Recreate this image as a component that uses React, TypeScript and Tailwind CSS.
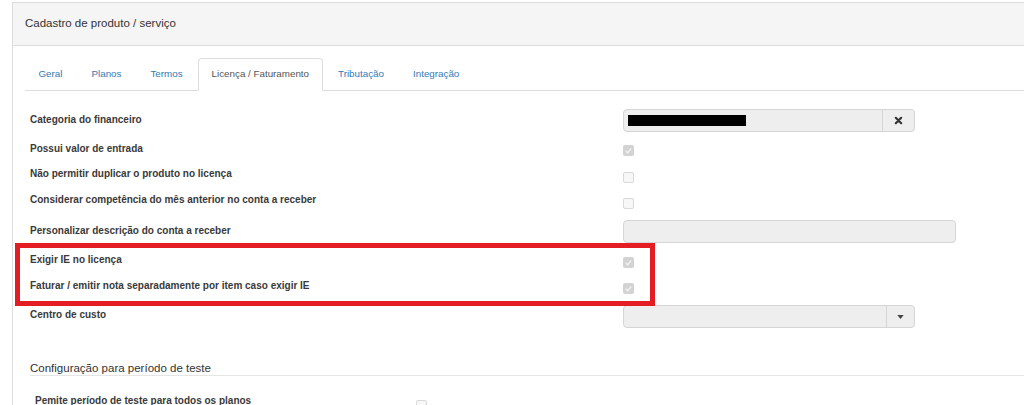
import React from 'react';

const tabs = ['Geral', 'Planos', 'Termos', 'Licença / Faturamento', 'Tributação', 'Integração'];

function Check({ checked }: { checked?: boolean }) {
  if (checked) {
    return (
      <span className="flex h-[11px] w-[11px] items-center justify-center rounded-[2px] bg-[#d3d3d3]">
        <svg viewBox="0 0 12 12" className="h-[9px] w-[9px]">
          <path d="M2.3 6.4 L4.9 9 L9.8 3.2" fill="none" stroke="#f3f3f3" strokeWidth="1.7" />
        </svg>
      </span>
    );
  }
  return <span className="block h-[11px] w-[11px] rounded-[2px] border border-[#d9d9d9] bg-[#f7f7f7]" />;
}

function Label({ children, className = '' }: { children: React.ReactNode; className?: string }) {
  return (
    <div className={`w-[593px] shrink-0 text-[10px] font-bold leading-[14px] text-[#3a3a3a] ${className}`}>
      {children}
    </div>
  );
}

export default function App() {
  return (
    <div className="h-[405px] w-[1024px] overflow-hidden bg-white font-['Liberation_Sans',Arial,sans-serif]">
      <div className="ml-[12px] mt-[2px] w-[1100px] border-l border-t border-[#ddd]">
        {/* cabeçalho do painel */}
        <div className="flex h-[43px] items-center border-b border-[#ddd] bg-[#f5f5f5] pl-[12px] text-[11.5px] text-[#333]">
          Cadastro de produto / serviço
        </div>

        <div className="pl-[12px] pt-[12px]">
          <ul className="flex border-b border-[#ddd]">
            {tabs.map((t, i) => (
              <li key={t} className="-mb-px mr-[2px]">
                <span
                  className={
                    i === 3
                      ? 'flex h-[33px] items-center rounded-t-[4px] border border-[#ddd] border-b-transparent bg-white px-[12.5px] text-[9.8px] text-[#555]'
                      : 'flex h-[33px] items-center rounded-t-[4px] border border-transparent px-[12.5px] text-[9.8px] text-[#337ab7]'
                  }
                >
                  {t}
                </span>
              </li>
            ))}
          </ul>

          <div className="pl-[5px] pt-[16px]">
            <div className="flex h-[28px] items-start">
              <Label className="pt-[6px]">Categoria do financeiro</Label>
              <div className="mt-[2px] flex h-[23px] w-[292px] rounded-[4px] border border-[#d5d5d5] bg-[#eee]">
                <div className="flex flex-1 items-center pl-[4px]">
                  <span className="h-[11px] w-[118px] bg-black" />
                </div>
                <div className="flex w-[32px] items-center justify-center border-l border-[#d5d5d5]">
                  <svg viewBox="0 0 10 10" className="h-[9px] w-[9px]">
                    <path d="M2 2 L8 8 M8 2 L2 8" stroke="#333" strokeWidth="2.4" strokeLinecap="round" />
                  </svg>
                </div>
              </div>
            </div>

            <div className="flex h-[27px] items-start">
              <Label className="pt-[7px]">Possui valor de entrada</Label>
              <div className="mt-[10px]"><Check checked /></div>
            </div>

            <div className="flex h-[26px] items-start">
              <Label className="pt-[5px]">Não permitir duplicar o produto no licença</Label>
              <div className="mt-[10px]"><Check /></div>
            </div>

            <div className="flex h-[27px] items-start">
              <Label className="pt-[5px]">Considerar competência do mês anterior no conta a receber</Label>
              <div className="mt-[10px]"><Check /></div>
            </div>

            <div className="flex h-[30px] items-start">
              <Label className="pt-[9px]">Personalizar descrição do conta a receber</Label>
              <div className="mt-[5px] h-[23px] w-[333px] rounded-[4px] border border-[#d5d5d5] bg-[#eee]" />
            </div>

            <div className="relative">
              <div className="flex h-[27px] items-start">
                <Label className="pt-[8px]">Exigir IE no licença</Label>
                <div className="mt-[12px]"><Check checked /></div>
              </div>
              <div className="flex h-[28px] items-start">
                <Label className="pt-[7px]">Faturar / emitir nota separadamente por item caso exigir IE</Label>
                <div className="mt-[11px]"><Check checked /></div>
              </div>
              {/* marcação em vermelho */}
              <div className="pointer-events-none absolute -left-[15px] -top-[2px] h-[63px] w-[640px] border-[5px] border-[#e41d24]" />
            </div>

            <div className="flex h-[30px] items-start">
              <Label className="pt-[8px]">Centro de custo</Label>
              <div className="mt-[5px] flex h-[23px] w-[292px] rounded-[4px] border border-[#d5d5d5] bg-[#eee]">
                <div className="flex-1" />
                <div className="flex w-[28px] items-center justify-center border-l border-[#d5d5d5]">
                  <svg viewBox="0 0 8 5" className="h-[4px] w-[7px]">
                    <path d="M0 0 L8 0 L4 5 Z" fill="#444" />
                  </svg>
                </div>
              </div>
            </div>

            <div className="mt-[31px] border-b border-[#e5e5e5] text-[11.5px] leading-[14px] text-[#333]">
              Configuração para período de teste
            </div>

            <div className="mt-[18px] flex items-start pl-[5px]">
              <div className="w-[381px] shrink-0 text-[10px] font-bold leading-[14px] text-[#3a3a3a]">
                Pemite período de teste para todos os planos
              </div>
              <div className="mt-[6px]"><Check /></div>
            </div>
          </div>
        </div>
      </div>
    </div>
  );
}
